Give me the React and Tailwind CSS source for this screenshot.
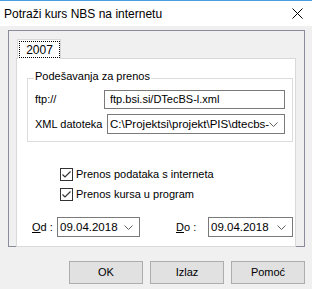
import React from "react";

const font = { fontFamily: '"Liberation Sans", Arial, sans-serif' };

function Chevron() {
  return (
    <svg width="9" height="5" viewBox="0 0 9 5" className="shrink-0">
      <path d="M0.5 0.5 L4.5 4.5 L8.5 0.5" fill="none" stroke="#606060" strokeWidth="1" />
    </svg>
  );
}

function Combo({ value, className = "" }) {
  return (
    <div className={`flex h-[20px] items-center border border-[#7a7a7a] bg-white pl-[2px] pr-[6px] ${className}`}>
      <span className="min-w-0 flex-1 overflow-hidden whitespace-nowrap text-[11.5px] leading-[14px]">{value}</span>
      <Chevron />
    </div>
  );
}

function Check({ label }) {
  return (
    <label className="flex h-[13px] items-center gap-[3px]">
      <span className="flex h-[13px] w-[13px] items-center justify-center border border-[#333] bg-white">
        <svg width="11" height="11" viewBox="0 0 11 11">
          <path d="M1.5 5.5 L4 8 L9.5 2.5" fill="none" stroke="#333" strokeWidth="1.2" />
        </svg>
      </span>
      <span className="leading-none">{label}</span>
    </label>
  );
}

function Btn({ children }) {
  return (
    <button
      type="button"
      className="flex h-[23px] w-[74px] items-center justify-center border border-[#adadad] bg-[#e1e1e1] text-[11px] text-black"
    >
      {children}
    </button>
  );
}

export default function App() {
  return (
    <div className="h-[289px] w-[312px] overflow-hidden bg-[#f0f0f0] text-[11px] text-black" style={font}>
      <div className="flex h-[26px] items-center justify-between border-t border-[#4a9ee0] bg-white pl-[4px] pr-[9px]">
        <span className="text-[12px]">Potraži kurs NBS na internetu</span>
        <svg width="11" height="11" viewBox="0 0 11 11">
          <path d="M0.5 0.5 L10.5 10.5 M10.5 0.5 L0.5 10.5" stroke="#000" strokeWidth="1" />
        </svg>
      </div>

      <div className="pl-[8px] pt-[4px]">
        <div className="h-[217px] w-[297px] border border-[#8a8b9b] pl-[7px] pt-[8px]">
          <div className="relative z-10 -mb-px ml-[1px] h-[20px] w-[44px] border border-b-0 border-[#d9d9d9] bg-white pl-[1px] pt-[1px]">
            <div className="flex h-[17px] w-[41px] items-center justify-center border border-dotted border-black text-[12px]">
              2007
            </div>
          </div>
          <div className="relative h-[189px] w-[280px] border border-[#d9d9d9] bg-white">
            <div className="relative ml-[10px] mt-[19px] h-[64px] w-[266px] border border-[#dcdcdc] pl-[7px] pt-[11px]">
              <span className="absolute -top-[8px] left-[6px] bg-white px-[1px] leading-none">Podešavanja za prenos</span>
              <div className="flex items-center">
                <span className="w-[69px]">ftp://</span>
                <div className="flex h-[19px] w-[181px] items-center border border-[#7a7a7a] pl-[5px] leading-none">
                  ftp.bsi.si/DTecBS-l.xml
                </div>
              </div>
              <div className="mt-[5px] flex items-center">
                <span className="w-[72px] whitespace-nowrap">XML datoteka</span>
                <Combo value="C:\Projektsi\projekt\PIS\dtecbs-l.xml" className="w-[178px]" />
              </div>
            </div>

            <div className="ml-[43px] mt-[26px] flex flex-col gap-[7px]">
              <Check label="Prenos podataka s interneta" />
              <Check label="Prenos kursa u program" />
            </div>

            <div className="ml-[15px] mt-[16px] flex items-center">
              <span className="w-[25px] whitespace-nowrap">
                <span className="underline">O</span>d :
              </span>
              <Combo value="09.04.2018" className="w-[83px]" />
              <span className="ml-[36px] w-[32px] whitespace-nowrap">
                <span className="underline">D</span>o :
              </span>
              <Combo value="09.04.2018" className="w-[85px]" />
            </div>
          </div>
        </div>
      </div>

      <div className="mt-[14px] flex justify-end gap-[7px] pr-[7px]">
        <Btn>OK</Btn>
        <Btn>Izlaz</Btn>
        <Btn>Pomoć</Btn>
      </div>
    </div>
  );
}
